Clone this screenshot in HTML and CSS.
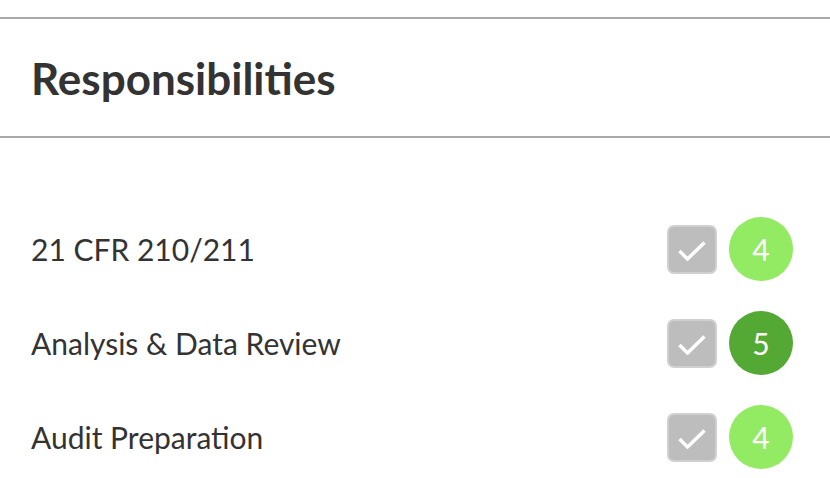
FILE: index.html
```html
<!DOCTYPE html>
<html>
<head>
<meta charset="utf-8">
<link rel="stylesheet" href="styles.css">
</head>
<body>
<section class="panel">
  <header class="panel-head">
    <h2 class="title">Responsibilities</h2>
  </header>
  <ul class="list">
    <li class="row">
      <span class="label">21 CFR 210/211</span>
      <span class="check"><svg viewBox="0 0 28 20" width="28" height="20"><path d="M1.5 10 L9.5 18 L26.5 1.5" fill="none" stroke="#fff" stroke-width="3.5"/></svg></span>
      <span class="score light">4</span>
    </li>
    <li class="row">
      <span class="label">Analysis &amp; Data Review</span>
      <span class="check"><svg viewBox="0 0 28 20" width="28" height="20"><path d="M1.5 10 L9.5 18 L26.5 1.5" fill="none" stroke="#fff" stroke-width="3.5"/></svg></span>
      <span class="score dark">5</span>
    </li>
    <li class="row">
      <span class="label">Audit Preparation</span>
      <span class="check"><svg viewBox="0 0 28 20" width="28" height="20"><path d="M1.5 10 L9.5 18 L26.5 1.5" fill="none" stroke="#fff" stroke-width="3.5"/></svg></span>
      <span class="score light">4</span>
    </li>
  </ul>
</section>
</body>
</html>
```
FILE: styles.css
```css
html, body {
  margin: 0;
  padding: 0;
  background: #fff;
}
body {
  font-family: Lato, "Open Sans", sans-serif;
  color: #333;
  padding-top: 17px;
}
.panel-head {
  border-top: 2px solid #a9a9a9;
  border-bottom: 2px solid #a9a9a9;
  height: 121px;
  box-sizing: border-box;
  display: flex;
  align-items: center;
  padding-left: 31px;
}
.title {
  margin: 0;
  font-size: 44px;
  font-weight: 700;
  line-height: 1;
  color: #333;
}
.list {
  list-style: none;
  margin: 0;
  padding: 79px 37px 0 31px;
}
.row {
  display: flex;
  align-items: center;
  height: 64px;
  margin-bottom: 30px;
}
.label {
  flex: 1;
  font-size: 30px;
  color: #333;
}
.check {
  width: 50px;
  height: 49px;
  box-sizing: border-box;
  border: 2px solid #d0d0d0;
  border-radius: 7px;
  background: #bdbdbd;
  display: flex;
  align-items: center;
  justify-content: center;
  margin-right: 12px;
}
.check svg {
  margin-top: 3px;
}
.score {
  width: 64px;
  height: 64px;
  border-radius: 50%;
  color: #fff;
  font-size: 30px;
  display: flex;
  align-items: center;
  justify-content: center;
}
.score.light { background: #93eb63; }
.score.dark { background: #53a934; }
```
